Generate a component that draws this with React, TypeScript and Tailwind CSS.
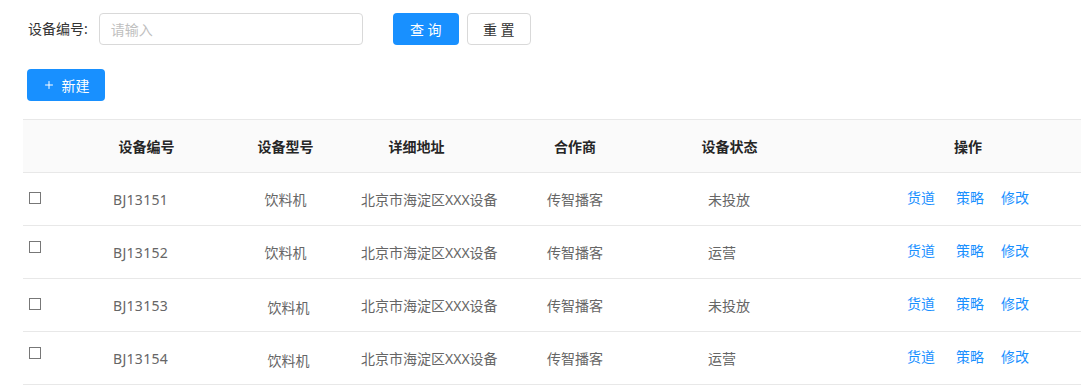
import { Plus } from "lucide-react";

interface Device {
  code: string;
  model: string;
  address: string;
  partner: string;
  status: string;
  // small per-row nudges seen in the original render
  cbClass: string;
  modelClass: string;
}

const devices: Device[] = [
  { code: "BJ13151", model: "饮料机", address: "北京市海淀区XXX设备", partner: "传智播客", status: "未投放", cbClass: "-mt-[2px]", modelClass: "pl-0 pt-0" },
  { code: "BJ13152", model: "饮料机", address: "北京市海淀区XXX设备", partner: "传智播客", status: "运营", cbClass: "-mt-[10px]", modelClass: "pl-0 pt-0" },
  { code: "BJ13153", model: "饮料机", address: "北京市海淀区XXX设备", partner: "传智播客", status: "未投放", cbClass: "-mt-[2px]", modelClass: "pl-[6px] pt-[4px]" },
  { code: "BJ13154", model: "饮料机", address: "北京市海淀区XXX设备", partner: "传智播客", status: "运营", cbClass: "-mt-[10px]", modelClass: "pl-[6px] pt-[4px]" },
];

const font = { fontFamily: '"Noto Sans", "Noto Sans CJK SC", sans-serif' };

export default function App() {
  return (
    <div className="w-[1081px] h-[390px] overflow-hidden bg-white" style={font}>
      {/* search bar */}
      <div className="flex items-center h-[32px] mt-[13px] pl-[28px]">
        <span className="text-[14px] text-[#333] leading-none">设备编号:</span>
        <div className="ml-[11px] w-[264px] h-[32px] border border-[#d9d9d9] rounded-[4px] flex items-center pl-[11px]">
          <span className="text-[14px] text-[#bfbfbf]">请输入</span>
        </div>
        <button className="ml-[30px] w-[66px] h-[32px] rounded-[4px] bg-[#1890ff] text-white text-[14px]">
          查 询
        </button>
        <button className="ml-[8px] w-[64px] h-[32px] rounded-[4px] border border-[#d9d9d9] bg-white text-[#333] text-[14px]">
          重 置
        </button>
      </div>

      {/* new button */}
      <div className="pl-[27px] mt-[24px]">
        <button className="w-[78px] h-[32px] rounded-[4px] bg-[#1890ff] text-white text-[14px] flex items-center justify-center gap-[7px]">
          <Plus size={12} strokeWidth={2} />
          <span>新建</span>
        </button>
      </div>

      {/* table */}
      <div className="ml-[23px] mt-[18px] w-[1112px]">
        <div className="flex h-[54px] bg-[#fafafa] border-t border-b border-[#e8e8e8] text-[14px] font-semibold text-[#262626] items-center">
          <div className="w-[40px]" />
          <div className="w-[167px] text-center">设备编号</div>
          <div className="w-[111px] text-center">设备型号</div>
          <div className="w-[151px] text-center">详细地址</div>
          <div className="w-[166px] text-center">合作商</div>
          <div className="w-[143px] text-center">设备状态</div>
          <div className="w-[334px] text-center">操作</div>
        </div>

        {devices.map((d) => (
          <div
            key={d.code}
            className="flex h-[53px] border-b border-[#e8e8e8] items-center text-[14px] text-[#666]"
          >
            <div className="w-[40px] pl-[6px] flex">
              <span className={`block w-[12px] h-[12px] border border-[#777] bg-white ${d.cbClass}`} />
            </div>
            <div className="w-[167px] pl-[50px] tracking-[0.3px]">{d.code}</div>
            <div className={`w-[111px] text-center ${d.modelClass}`}>{d.model}</div>
            <div className="w-[151px] pl-[20px] whitespace-nowrap">{d.address}</div>
            <div className="w-[166px] text-center">{d.partner}</div>
            <div className="w-[143px] pl-[50px]">{d.status}</div>
            <div className="w-[334px] flex justify-center text-[#1890ff] -mt-[4px]">
              <a className="cursor-pointer">货道</a>
              <a className="ml-[21px] cursor-pointer">策略</a>
              <a className="ml-[17px] cursor-pointer">修改</a>
            </div>
          </div>
        ))}
      </div>
    </div>
  );
}
